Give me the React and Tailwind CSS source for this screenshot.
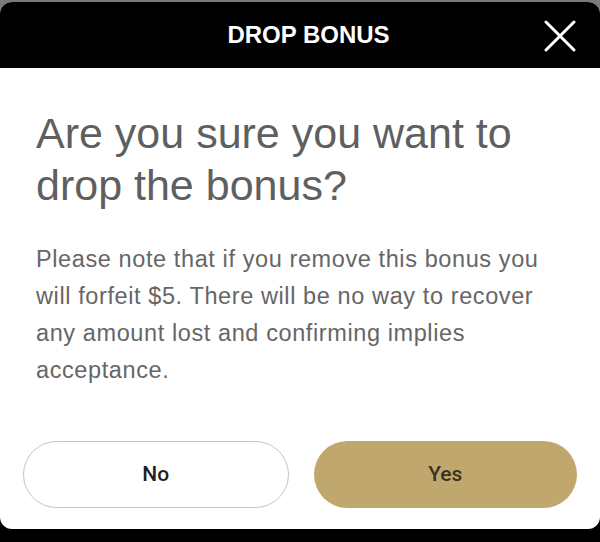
export default function App() {
  return (
    <div className="w-[600px] h-[542px] pt-[2px] bg-[linear-gradient(to_bottom,#7a7a7a_0px,#7a7a7a_20px,#000_20px)] overflow-hidden">
      <div className="bg-white rounded-[12px] overflow-hidden">
        <div className="relative h-[66px] bg-black flex items-center justify-center pl-[17px]">
          <span className="text-white text-[24px] font-bold leading-none font-['Liberation_Sans',Arial,sans-serif]">
            DROP BONUS
          </span>
          <button className="absolute right-[24px] top-[18px] w-[32px] h-[32px] flex items-center justify-center" aria-label="Close">
            <svg width="32" height="32" viewBox="0 0 32 32" fill="none">
              <path d="M2 2 L30 30 M30 2 L2 30" stroke="white" strokeWidth="3" strokeLinecap="round" />
            </svg>
          </button>
        </div>
        <div className="pt-[39px] pb-[21px] font-['Liberation_Sans',Arial,sans-serif]">
          <h1 className="px-[36px] text-[43px] leading-[52px] text-[#5f5f5f] font-normal">
            Are you sure you want to drop the bonus?
          </h1>
          <p className="pl-[36px] pr-[30px] mt-[30px] text-[23.5px] leading-[37px] tracking-[0.6px] text-[#666666]">
            Please note that if you remove this bonus you will forfeit $5. There will be no way to recover any amount lost and confirming implies acceptance.
          </p>
          <div className="px-[23px] mt-[52px] flex gap-[25px]">
            <button className="flex-1 h-[67px] rounded-full border border-[#c4c4c4] bg-white text-[21px] text-[#222222] font-medium font-['Roboto',Arial,sans-serif]">
              No
            </button>
            <button className="flex-1 h-[67px] rounded-full bg-[#c0a76d] text-[21px] text-[#3a3220] font-medium font-['Roboto',Arial,sans-serif]">
              Yes
            </button>
          </div>
        </div>
      </div>
    </div>
  );
}
